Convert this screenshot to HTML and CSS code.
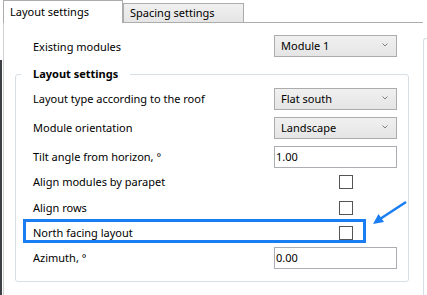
FILE: index.html
```html
<!DOCTYPE html>
<html lang="en">
<head>
    <meta charset="UTF-8">
    <title>Layout settings</title>
    <link rel="stylesheet" href="styles.css">
</head>
<body>
    <div class="tabs">
        <div class="tab active">Layout settings</div>
        <div class="tab">Spacing settings</div>
    </div>
    <div class="page">
        <div class="content">
            <div class="row top-row">
                <span class="label">Existing modules</span>
                <div class="select">Module 1<svg class="chevron" width="6" height="4" viewBox="0 0 6 4"><polyline points="0.5,0.5 3,3 5.5,0.5" /></svg></div>
            </div>
            <fieldset class="group">
                <legend>Layout settings</legend>
                <div class="row gap-lg">
                    <span class="label">Layout type according to the roof</span>
                    <div class="select">Flat south<svg class="chevron" width="6" height="4" viewBox="0 0 6 4"><polyline points="0.5,0.5 3,3 5.5,0.5" /></svg></div>
                </div>
                <div class="row gap-lg">
                    <span class="label">Module orientation</span>
                    <div class="select">Landscape<svg class="chevron" width="6" height="4" viewBox="0 0 6 4"><polyline points="0.5,0.5 3,3 5.5,0.5" /></svg></div>
                </div>
                <div class="row">
                    <span class="label">Tilt angle from horizon, °</span>
                    <div class="input">1.00</div>
                </div>
                <div class="row gap-sm">
                    <span class="label">Align modules by parapet</span>
                    <div class="check-cell"><span class="checkbox"></span></div>
                </div>
                <div class="row">
                    <span class="label">Align rows</span>
                    <div class="check-cell"><span class="checkbox"></span></div>
                </div>
                <div class="row marked">
                    <span class="label">North facing layout</span>
                    <div class="check-cell"><span class="checkbox"></span></div>
                    <div class="highlight"></div>
                </div>
                <div class="row">
                    <span class="label">Azimuth, °</span>
                    <div class="input">0.00</div>
                </div>
            </fieldset>
        </div>
        <div class="side"></div>
    </div>
    <svg class="arrow" width="427" height="295" viewBox="0 0 427 295">
        <line x1="406" y1="202" x2="380" y2="219" />
        <polygon points="373,224 384,222 378.5,214" />
    </svg>
</body>
</html>
```
FILE: styles.css
```css
body {
    margin: 0;
    font-family: "Noto Sans", sans-serif;
    font-size: 11px;
    color: #000000;
    background-color: #ffffff;
    position: relative;
    height: 295px;
    overflow: hidden;
}
/* dark edge of the neighbouring window */
body::before {
    content: "";
    position: absolute;
    left: 0;
    top: 60px;
    bottom: 0;
    width: 2px;
    background: #3c3f44;
}
.tabs {
    display: flex;
    align-items: flex-end;
    margin-left: 3px;
    width: 420px;
    height: 22px;
    border-bottom: 1px solid #acacac;
}
.tab {
    box-sizing: border-box;
    height: 19px;
    width: 121px;
    padding-left: 6px;
    line-height: 18px;
    border: 1px solid #acacac;
    border-bottom: none;
    background: linear-gradient(#f0f0f0, #e5e5e5);
}
.tab.active {
    width: 120px;
    height: 23px;
    margin-bottom: -1px;
    line-height: 22px;
    background: #ffffff;
    position: relative;
}
.page {
    display: flex;
    margin-left: 3px;
    border-left: 1px solid #d0d0d0;
    height: 272px;
}
.content {
    width: 419px;
    padding-top: 12px;
}
.side {
    flex: 1;
    margin-top: 15px;
    border-left: 1px solid #d5dfe5;
    border-top: 1px solid #d5dfe5;
    border-top-left-radius: 3px;
}
.row {
    display: flex;
    align-items: center;
    height: 23px;
    margin-bottom: 2px;
}
.row.gap-lg {
    margin-bottom: 6px;
}
.row.gap-sm {
    margin-bottom: 3px;
}
.top-row {
    margin-left: 29px;
    width: 364px;
    height: 22px;
    margin-bottom: 0;
}
.label {
    flex: 1;
    white-space: nowrap;
}
.select {
    box-sizing: border-box;
    position: relative;
    width: 123px;
    height: 22px;
    line-height: 20px;
    padding-left: 6px;
    border: 1px solid #acacac;
    background: linear-gradient(#f0f0f0, #e5e5e5);
}
.chevron {
    position: absolute;
    right: 8px;
    top: 7px;
}
.chevron polyline {
    fill: none;
    stroke: #808080;
    stroke-width: 1;
}
.input {
    box-sizing: border-box;
    width: 123px;
    height: 22px;
    line-height: 20px;
    padding-left: 1px;
    border: 1px solid #abadb3;
    background: #ffffff;
}
.check-cell {
    width: 123px;
    height: 23px;
    display: flex;
    align-items: center;
}
.checkbox {
    box-sizing: border-box;
    display: block;
    width: 14px;
    height: 14px;
    margin-left: 65px;
    border: 1px solid #555555;
    background: #ffffff;
}
.group {
    margin: 9px 0 0 11px;
    width: 394px;
    box-sizing: border-box;
    padding: 5px 11px 10px 17px;
    border: 1px solid #d5dfe5;
    border-radius: 3px;
}
.group legend {
    font-weight: bold;
    padding: 0 12px;
    margin-left: -12px;
    line-height: 16px;
}
.marked {
    position: relative;
}
.highlight {
    position: absolute;
    left: -10px;
    top: -2px;
    width: 343px;
    height: 24px;
    box-sizing: border-box;
    border: 3px solid #1a7ef2;
}
.arrow {
    position: absolute;
    left: 0;
    top: 0;
    pointer-events: none;
}
.arrow line {
    stroke: #1a7ef2;
    stroke-width: 2.5;
}
.arrow polygon {
    fill: #1a7ef2;
}
```
